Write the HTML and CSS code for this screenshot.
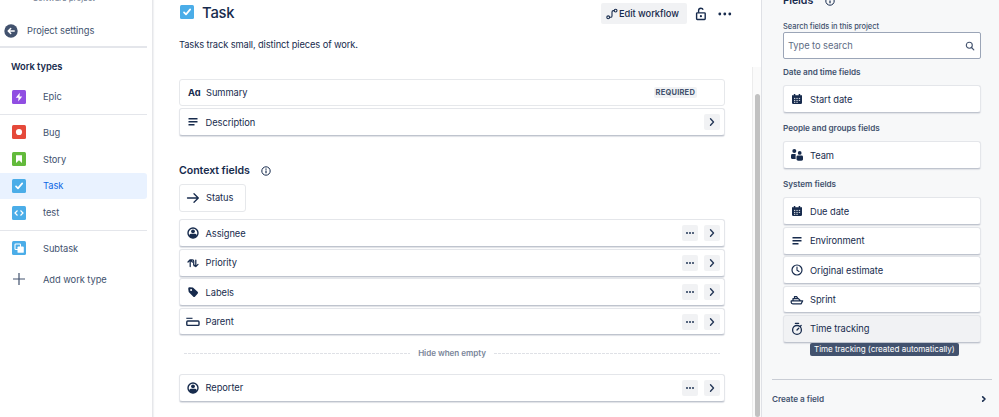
FILE: index.html
```html
<!DOCTYPE html>
<html lang="en">
<head>
<meta charset="utf-8">
<title>Task - Work types</title>
<link rel="stylesheet" href="styles.css">
</head>
<body>
<svg class="defs" aria-hidden="true">
  <symbol id="check" viewBox="0 0 14 14"><rect width="14" height="14" rx="1.5" fill="#4bade8"/><path d="M4 7.4l2 2 4.2-5" fill="none" stroke="#fff" stroke-width="1.7" stroke-linecap="round" stroke-linejoin="round"/></symbol>
  <symbol id="lines" viewBox="0 0 14 14"><path d="M2.5 3.8h9M2.5 6.8h9M2.5 9.8h6" fill="none" stroke="currentColor" stroke-width="1.4"/></symbol>
  <symbol id="person" viewBox="0 0 14 14"><circle cx="7" cy="7" r="5" fill="none" stroke="currentColor" stroke-width="1.4"/><circle cx="7" cy="5.3" r="1.9" fill="currentColor"/><path d="M3.2 10.5V9.4Q3.2 7.8 4.8 7.8h4.4q1.6 0 1.6 1.6v1.1Q9 12.2 7 12.2T3.2 10.5z" fill="currentColor"/></symbol>
  <symbol id="calendar" viewBox="0 0 14 14"><path d="M2 3.2h1.8V1.9h1.5v1.3h3.4V1.9h1.5v1.3H12v7.6q0 1.2-1.2 1.2H3.2Q2 12 2 10.8z" fill="currentColor"/><path d="M4 6.4h1.3M6.4 6.4h1.3M8.8 6.4h1.3M4 8.4h1.3M6.4 8.4h1.3M8.8 8.4h1.3M4 10.3h1.3M6.4 10.3h1.3" stroke="#fff" stroke-width=".9"/></symbol>
  <symbol id="info" viewBox="0 0 10 10"><circle cx="5" cy="5" r="4.2" fill="none" stroke="currentColor" stroke-width="1"/><path d="M5 4.5v2.8M5 2.6v1.1" stroke="currentColor" stroke-width="1.2"/></symbol>
  <symbol id="dots" viewBox="0 0 16 16"><g fill="currentColor"><circle cx="5" cy="8" r="1"/><circle cx="8" cy="8" r="1"/><circle cx="11" cy="8" r="1"/></g></symbol>
  <symbol id="chevron" viewBox="0 0 16 16"><path d="M6.5 4.8L9.5 8l-3 3.2" fill="none" stroke="currentColor" stroke-width="1.4" stroke-linecap="round" stroke-linejoin="round"/></symbol>
</svg>
<div class="app">
  <nav class="sidebar">
    <div class="project-kind"><span>Software project</span></div>
    <a class="back"><svg width="14" height="14" viewBox="0 0 14 14"><circle cx="7" cy="7" r="6.7" fill="#42526e"/><path d="M10.2 7H4.3M6.7 4.5L4.2 7l2.5 2.5" fill="none" stroke="#fff" stroke-width="1.5" stroke-linecap="round" stroke-linejoin="round"/></svg><span>Project settings</span></a>
    <h2>Work types</h2>
    <a class="type epic"><svg width="14" height="14" viewBox="0 0 14 14"><rect width="14" height="14" rx="1.5" fill="#904ee2"/><path d="M7.8 2.7L3.8 7.7h2.7l-.3 3.7 4-5H7.5z" fill="#fff"/></svg><span>Epic</span></a>
    <div class="group">
      <a class="type"><svg width="14" height="14" viewBox="0 0 14 14"><rect width="14" height="14" rx="1.5" fill="#e5493a"/><circle cx="7" cy="7" r="3.1" fill="#fff"/></svg><span>Bug</span></a>
      <a class="type"><svg width="14" height="14" viewBox="0 0 14 14"><rect width="14" height="14" rx="1.5" fill="#63ba3c"/><path d="M4 3.2h6v7.8L7 8.2 4 11z" fill="#fff"/></svg><span>Story</span></a>
      <a class="type active"><svg width="14" height="14"><use href="#check"/></svg><span>Task</span></a>
      <a class="type"><svg width="14" height="14" viewBox="0 0 14 14"><rect width="14" height="14" rx="1.5" fill="#4bade8"/><path d="M5.5 4.5L3 7l2.5 2.5M8.5 4.5L11 7 8.5 9.5" fill="none" stroke="#fff" stroke-width="1.2"/></svg><span>test</span></a>
    </div>
    <div class="group last">
      <a class="type"><svg width="14" height="14" viewBox="0 0 14 14"><rect width="14" height="14" rx="1.5" fill="#4bade8"/><rect x="3" y="3" width="5.5" height="5.5" rx=".8" fill="none" stroke="#fff" stroke-width="1.1"/><rect x="5.5" y="5.5" width="6.3" height="6.3" rx=".9" fill="#fff"/></svg><span>Subtask</span></a>
      <a class="type add"><svg width="14" height="14" viewBox="0 0 14 14"><path d="M7 1v12M1 7h12" stroke="#42526e" stroke-width="1.2"/></svg><span>Add work type</span></a>
    </div>
  </nav>

  <main class="main">
    <header class="head">
      <svg class="type-icon" width="14" height="14"><use href="#check"/></svg>
      <h1>Task</h1>
      <button class="workflow"><svg width="12" height="12" viewBox="0 0 12 12"><g fill="none" stroke="currentColor" stroke-width="1.1"><circle cx="2.2" cy="9.3" r="1.4"/><circle cx="9.6" cy="2.6" r="1.4"/><path d="M3.6 9.3h1q1.4 0 1.4-1.4V4q0-1.4 1.4-1.4h.8"/></g></svg><span>Edit workflow</span></button>
      <svg class="lock" width="12" height="14" viewBox="0 0 12 14"><g fill="none" stroke="currentColor" stroke-width="1.4"><rect x="1.6" y="5.9" width="8.6" height="6.6" rx=".7"/><path d="M3.6 5.8V3.6q0-2.3 2.3-2.3 1.7 0 2.2 1.5"/></g><circle cx="5.9" cy="9.2" r="1.1" fill="currentColor"/></svg>
      <svg class="more" width="14" height="4" viewBox="0 0 14 4"><g fill="currentColor"><circle cx="1.8" cy="2" r="1.4"/><circle cx="6.8" cy="2" r="1.4"/><circle cx="11.8" cy="2" r="1.4"/></g></svg>
    </header>
    <p class="blurb"><span>Tasks track small, distinct pieces of work.</span></p>
    <div class="scroller">
      <div class="fields">
        <div class="card flat"><b class="aa">Aa</b><span class="name">Summary</span><span class="required">REQUIRED</span></div>
        <div class="card second"><svg class="ico"><use href="#lines"/></svg><span class="name">Description</span><svg class="btn"><use href="#chevron"/></svg></div>
        <h3><span>Context fields</span><svg width="10" height="10"><use href="#info"/></svg></h3>
        <div class="card flat status"><svg class="ico" viewBox="0 0 14 14"><path d="M1.5 7h10.7M8 2.7L12.3 7 8 11.3" fill="none" stroke="currentColor" stroke-width="1.3" stroke-linecap="round" stroke-linejoin="round"/></svg><span class="name">Status</span></div>
        <div class="stack">
          <div class="card"><svg class="ico"><use href="#person"/></svg><span class="name">Assignee</span><svg class="btn"><use href="#dots"/></svg><svg class="btn"><use href="#chevron"/></svg></div>
          <div class="card"><svg class="ico" viewBox="0 0 14 14"><path d="M4.2 10.6V4M2 6l2.2-2.2L6.4 6M5 3.8h1.4q1.3 0 1.3 1.3v3.6q0 1.5 1.5 1.5h.8M9.8 4v6.4M7.6 8.4l2.2 2.2L12 8.4" fill="none" stroke="currentColor" stroke-width="1.25" stroke-linecap="round" stroke-linejoin="round"/></svg><span class="name">Priority</span><svg class="btn"><use href="#dots"/></svg><svg class="btn"><use href="#chevron"/></svg></div>
          <div class="card"><svg class="ico" viewBox="0 0 14 14"><path fill-rule="evenodd" d="M2.2 3.7q0-1.4 1.4-1.4l3.3.1 4.7 4.4q1 1 0 2l-2.5 2.6q-1 1-2 0L2.7 7.1zM5.1 4.1a1 1 0 1 0 .01 2 1 1 0 0 0 0-2z" fill="currentColor"/></svg><span class="name">Labels</span><svg class="btn"><use href="#dots"/></svg><svg class="btn"><use href="#chevron"/></svg></div>
          <div class="card"><svg class="ico" viewBox="0 0 14 14"><path d="M.3 3.3h6.2" stroke="currentColor" stroke-width="1.1"/><rect x=".8" y="6" width="12.2" height="4.4" rx=".9" fill="none" stroke="currentColor" stroke-width="1.4"/></svg><span class="name">Parent</span><svg class="btn"><use href="#dots"/></svg><svg class="btn"><use href="#chevron"/></svg></div>
        </div>
        <div class="divider"><i></i><span>Hide when empty</span><i></i></div>
        <div class="card"><svg class="ico"><use href="#person"/></svg><span class="name">Reporter</span><svg class="btn"><use href="#dots"/></svg><svg class="btn"><use href="#chevron"/></svg></div>
      </div>
      <div class="track"><div class="thumb"></div></div>
    </div>
  </main>

  <aside class="panel">
    <h3 class="panel-title"><span>Fields</span><svg width="10" height="10"><use href="#info"/></svg></h3>
    <label>Search fields in this project</label>
    <div class="search"><span>Type to search</span><svg width="10" height="10" viewBox="0 0 10 10"><circle cx="4.3" cy="4.3" r="3" fill="none" stroke="#42526e" stroke-width="1.1"/><path d="M6.5 6.5l2.3 2.3" stroke="#42526e" stroke-width="1.2" stroke-linecap="round"/></svg></div>
    <h4>Date and time fields</h4>
    <div class="card"><svg class="ico"><use href="#calendar"/></svg><span class="name">Start date</span></div>
    <h4 class="people">People and groups fields</h4>
    <div class="card"><svg class="ico" viewBox="0 0 14 14"><g fill="currentColor"><circle cx="4.3" cy="3.1" r="2"/><path d="M1 7.4Q1 6 2.4 6h3.2v4.9H2.1Q1 10.9 1 9.8z"/><circle cx="9.7" cy="4.9" r="1.9"/><path d="M6.5 8.8q0-1.4 1.4-1.4h3.7q1.4 0 1.4 1.4v2.4q0 1.5-3.2 1.5t-3.3-1.5z"/></g></svg><span class="name">Team</span></div>
    <h4 class="system">System fields</h4>
    <div class="stack">
      <div class="card"><svg class="ico"><use href="#calendar"/></svg><span class="name">Due date</span></div>
      <div class="card"><svg class="ico"><use href="#lines"/></svg><span class="name">Environment</span></div>
      <div class="card"><svg class="ico" viewBox="0 0 14 14"><circle cx="7" cy="7" r="5" fill="none" stroke="currentColor" stroke-width="1.2"/><path d="M7 4v3.2l2 1.3" fill="none" stroke="currentColor" stroke-width="1.1" stroke-linecap="round"/></svg><span class="name">Original estimate</span></div>
      <div class="card"><svg class="ico" viewBox="0 0 14 14"><path d="M3 7.4V5.6h5.4l1.8 1.9M4.5 5.4V3.5h2.1l1.1 1.9M1.2 7.8h11.5l-1.5 3H2.8q-1.6 0-1.6-1.5z" fill="none" stroke="currentColor" stroke-width="1.25" stroke-linejoin="round"/></svg><span class="name">Sprint</span></div>
      <div class="card hover"><svg class="ico" viewBox="0 0 14 14"><circle cx="7" cy="7.9" r="4.4" fill="none" stroke="currentColor" stroke-width="1.3"/><path d="M5.4 1.4h3.2M7 8l1.7-1.8M10.4 4.2l.8-.8" stroke="currentColor" stroke-width="1.3" stroke-linecap="round"/></svg><span class="name">Time tracking</span><div class="tooltip"><span>Time tracking (created automatically)</span></div></div>
    </div>
    <footer><span>Create a field</span><svg width="8" height="8" viewBox="0 0 8 8"><path d="M2.7 1.8L5 4 2.7 6.2" fill="none" stroke="currentColor" stroke-width="1.6" stroke-linecap="round" stroke-linejoin="round"/></svg></footer>
  </aside>
</div>
</body>
</html>
```
FILE: styles.css
```css
* { box-sizing: border-box; margin: 0; }
body { width: 999px; height: 417px; overflow: hidden; background: #fff; color: #172b4d; font: 9.3px/14px Inter, sans-serif; letter-spacing: -.05px; }
.defs { position: absolute; width: 0; height: 0; }
svg { display: block; flex: none; }
span, label, h1, h2, h3, h4 { white-space: nowrap; }
.app { display: flex; height: 417px; }

.sidebar { width: 153px; flex: none; border-right: 1px solid #e6e7ea; box-shadow: 1px 0 1px #f1f2f4; color: #42526e; }
.project-kind { display: flex; align-items: flex-start; height: 15px; padding-left: 33px; font-size: 8px; color: #6b778c; }
.project-kind span { margin-top: -9px; }
.back { display: flex; align-items: center; gap: 9px; width: 147px; height: 33.4px; padding-left: 4px; border-bottom: 2px solid #e4e6eb; }
.sidebar h2 { height: 36.6px; padding-left: 11px; font-size: 9.4px; line-height: 37px; font-weight: 600; color: #172b4d; }
.type { display: flex; align-items: center; gap: 17px; width: 147px; height: 26.8px; padding-left: 12px; }
.type span { padding-top: 1px; }
.epic { height: 24px; margin-bottom: 5px; }
.group { width: 147px; border-top: 1px solid #e4e6eb; padding-top: 4px; height: 116px; }
.active { background: #e9f2ff; color: #0c66e4; border-radius: 0 3px 3px 0; }
.add { margin-top: 4px; }

.main { width: 608px; flex: none; display: flex; flex-direction: column; }
.head { display: flex; align-items: center; height: 27px; padding-left: 27px; }
.type-icon { margin-bottom: 3px; }
.head h1 { margin: 0 0 1px 8px; width: 399px; font-size: 14.8px; font-weight: 500; letter-spacing: -.2px; }
.workflow { display: flex; align-items: center; gap: 1px; width: 86px; height: 21px; padding: 0 0 0 5px; border: 0; border-radius: 2px; background: #f1f2f4; color: #172b4d; font: 500 9.3px Inter, sans-serif; letter-spacing: -.05px; }
.lock { margin-left: 8px; }
.more { margin-left: 11px; }
.blurb { height: 40px; padding: 10.5px 0 0 26px; letter-spacing: -.1px; }
.scroller { display: flex; flex: 1; justify-content: space-between; padding-left: 26px; }
.fields { width: 546px; padding-top: 11.5px; }
.card { position: relative; display: flex; align-items: center; height: 27.8px; padding: 0 4.5px 0 5.5px; background: #fff; border: 1px solid #e4e6ea; border-bottom-color: #bfc4ce; border-radius: 3px; box-shadow: 0 1px 1px #dfe1e6; }
.card.flat { padding-left: 6px; border-color: #e6e8eb; box-shadow: none; }
.second { margin-top: 2.2px; }
.ico { width: 14px; height: 14px; margin-right: 6px; }
.aa { width: 18px; margin-left: 2px; padding-top: 1px; font-size: 9.3px; font-weight: 700; font-feature-settings: "cv11"; }
.name { flex: 1; padding-top: 1px; }
.required { margin-right: 22.5px; padding: 0 2px; border-radius: 2px; background: #f1f2f4; color: #42526e; font-size: 7.5px; line-height: 11px; font-weight: 700; letter-spacing: .2px; }
.btn { width: 16px; height: 16px; margin-left: 5.5px; border-radius: 2px; background: #f1f2f4; color: #253858; }
.fields h3 { display: flex; align-items: center; gap: 11px; margin-top: 27.8px; height: 14px; font-size: 10.6px; font-weight: 600; }
.fields .status { width: 67px; margin-top: 5.8px; }
.stack { display: flex; flex-direction: column; gap: 1.6px; }
.fields .stack { margin-top: 7.8px; }
.divider { display: flex; align-items: center; justify-content: space-between; height: 14px; margin: 10.8px 5px 13.6px; color: #7a869a; font-size: 8.1px; font-weight: 600; }
.divider i { width: 226px; height: 1px; background: repeating-linear-gradient(90deg, #dfe1e6 0 3px, transparent 3px 4px); }
.track { width: 9px; border-left: 1px solid #ececec; background: #fafafa; padding: 27px 1px 0 2px; }
.thumb { width: 5px; height: 323px; border-radius: 3px; background: #c1c1c1; }

.panel { flex: 1; border-left: 1px solid #dfe1e6; background: #f7f8f9; padding: 0 18px 0 21px; }
.panel-title { display: flex; align-items: center; gap: 12px; height: 14px; margin-top: -6px; font-size: 10.6px; font-weight: 600; }
.panel label { display: block; margin-top: 12px; height: 12px; color: #42526e; font-size: 7.5px; font-weight: 500; }
.search { display: flex; align-items: center; justify-content: space-between; height: 27px; padding: 0 5px 0 4px; border: 1px solid #9ba5b7; border-radius: 2px; background: #fff; color: #5e6c84; }
.panel h4 { height: 26.3px; line-height: 27px; color: #42526e; font-size: 8.2px; font-weight: 600; }
.panel h4.people, .panel h4.system { height: 28.3px; line-height: 31px; }
.panel .card { padding-left: 5.5px; }
.panel .ico { margin-right: 6.5px; }
.panel .card.hover { background: #f1f2f4; }
.tooltip { position: absolute; left: 26px; top: 26.5px; width: 149px; height: 13px; padding-left: 4px; border-radius: 2px; background: #42526e; color: #fff; font-size: 8.1px; line-height: 13px; }
.panel footer { display: flex; align-items: center; justify-content: space-between; margin: 36.2px -11px 0; height: 39px; padding-right: 4px; border-top: 1px solid #c9cdd5; color: #42526e; font-size: 8.2px; font-weight: 600; }
.panel footer svg { color: #172b4d; }
```
